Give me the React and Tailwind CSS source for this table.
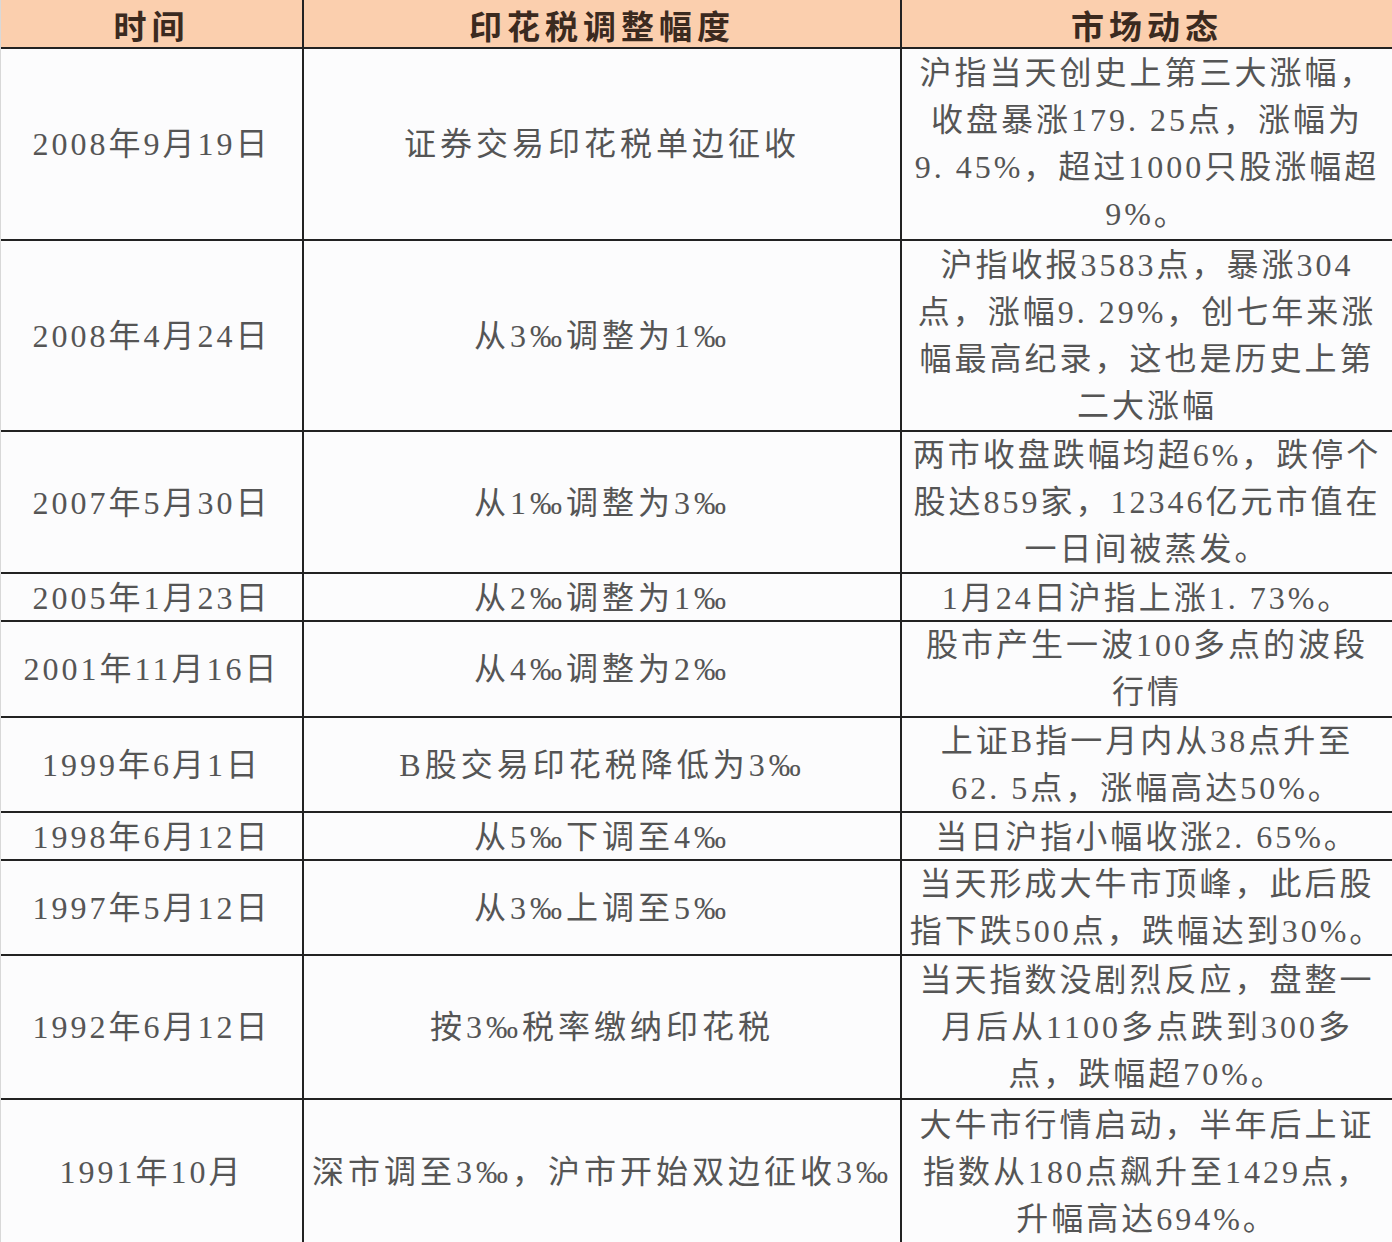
const rows = [
  {
    h: "h-[192px]",
    date: "2008年9月19日",
    change: "证券交易印花税单边征收",
    market: ["沪指当天创史上第三大涨幅，", "收盘暴涨179. 25点，涨幅为", "9. 45%，超过1000只股涨幅超", "9%。"],
  },
  {
    h: "h-[191px]",
    date: "2008年4月24日",
    change: "从3‰调整为1‰",
    market: ["沪指收报3583点，暴涨304", "点，涨幅9. 29%，创七年来涨", "幅最高纪录，这也是历史上第", "二大涨幅"],
  },
  {
    h: "h-[142px]",
    date: "2007年5月30日",
    change: "从1‰调整为3‰",
    market: ["两市收盘跌幅均超6%，跌停个", "股达859家，12346亿元市值在", "一日间被蒸发。"],
  },
  {
    h: "h-[48px]",
    date: "2005年1月23日",
    change: "从2‰调整为1‰",
    market: ["1月24日沪指上涨1. 73%。"],
  },
  {
    h: "h-[96px]",
    date: "2001年11月16日",
    change: "从4‰调整为2‰",
    market: ["股市产生一波100多点的波段", "行情"],
  },
  {
    h: "h-[95px]",
    date: "1999年6月1日",
    change: "B股交易印花税降低为3‰",
    market: ["上证B指一月内从38点升至", "62. 5点，涨幅高达50%。"],
  },
  {
    h: "h-[48px]",
    date: "1998年6月12日",
    change: "从5‰下调至4‰",
    market: ["当日沪指小幅收涨2. 65%。"],
  },
  {
    h: "h-[95px]",
    date: "1997年5月12日",
    change: "从3‰上调至5‰",
    market: ["当天形成大牛市顶峰，此后股", "指下跌500点，跌幅达到30%。"],
  },
  {
    h: "h-[144px]",
    date: "1992年6月12日",
    change: "按3‰税率缴纳印花税",
    market: ["当天指数没剧烈反应，盘整一", "月后从1100多点跌到300多", "点，跌幅超70%。"],
  },
  {
    h: "h-[146px]",
    date: "1991年10月",
    change: "深市调至3‰，沪市开始双边征收3‰",
    market: ["大牛市行情启动，半年后上证", "指数从180点飙升至1429点，", "升幅高达694%。"],
  },
];

const font = { fontFamily: '"Liberation Serif", "Noto Sans CJK SC", serif' };

export default function App() {
  return (
    <div
      className="w-[1392px] h-[1242px] overflow-hidden bg-[#fcfcfd] text-[#555] border-l border-[#d8d8d8]"
      style={font}
    >
      <div className="grid grid-cols-[301px_598px_1fr] h-[49px] bg-[#fbcfae] border-b-2 border-[#222] text-[#3b2a1f] font-bold text-[33px] tracking-[5px]">
        <div className="flex items-center justify-center pt-[4px]">时间</div>
        <div className="flex items-center justify-center pt-[4px] border-l-2 border-[#222]">印花税调整幅度</div>
        <div className="flex items-center justify-center pt-[4px] border-l-2 border-[#222]">市场动态</div>
      </div>

      {rows.map((r) => (
        <div
          key={r.date}
          className={`grid grid-cols-[301px_598px_1fr] ${r.h} border-b-2 border-[#222]`}
        >
          <div className="flex items-center justify-center text-[32px] tracking-[3px] whitespace-nowrap">
            {r.date}
          </div>
          <div className="flex items-center justify-center border-l-2 border-[#222] text-[32px] tracking-[4px] whitespace-nowrap">
            {r.change}
          </div>
          <div className="flex flex-col items-center justify-center border-l-2 border-[#222] text-[32px] leading-[47px] tracking-[3px] whitespace-nowrap">
            {r.market.map((line) => (
              <div key={line}>{line}</div>
            ))}
          </div>
        </div>
      ))}
    </div>
  );
}
